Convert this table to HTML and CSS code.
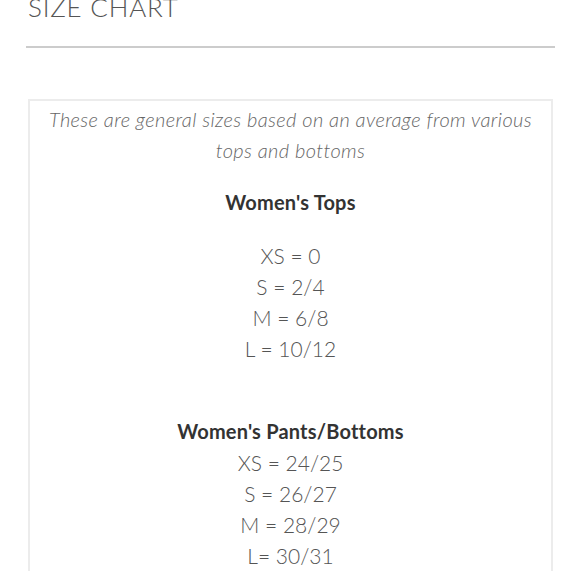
FILE: index.html
```html
<!DOCTYPE html>
<html>
<head>
<meta charset="utf-8">
<link rel="stylesheet" href="styles.css">
</head>
<body>
<div class="page">
  <h1 class="title">SIZE CHART</h1>
  <hr class="rule">
  <div class="chart">
    <p class="intro">These are general sizes based on an average from various tops and bottoms</p>
    <h2 class="group-title tops-title">Women's Tops</h2>
    <ul class="sizes">
      <li>XS = 0</li>
      <li>S = 2/4</li>
      <li>M = 6/8</li>
      <li>L = 10/12</li>
    </ul>
    <h2 class="group-title pants-title">Women's Pants/Bottoms</h2>
    <ul class="sizes pants">
      <li>XS = 24/25</li>
      <li>S = 26/27</li>
      <li>M = 28/29</li>
      <li>L= 30/31</li>
    </ul>
  </div>
</div>
</body>
</html>
```
FILE: styles.css
```css
html, body {
  margin: 0;
  padding: 0;
  background: #ffffff;
}
body {
  font-family: Lato, "Open Sans", sans-serif;
  color: #555;
}
.page {
  padding: 0 27px 0 28px;
  overflow: hidden;
  height: 580px;
}
.title {
  margin: -8px 0 0 0;
  font-size: 26px;
  line-height: 30px;
  font-weight: 300;
  letter-spacing: 0.8px;
  color: #555;
}
.rule {
  margin: 24px -2px 0 -2px;
  border: 0;
  height: 2px;
  background: #cccccc;
}
.chart {
  margin-top: 51px;
  border: 2px solid #ececec;
  border-bottom: 0;
  padding: 3px 12px 0;
  text-align: center;
}
.intro {
  margin: 0;
  font-style: italic;
  font-weight: 300;
  font-size: 20px;
  letter-spacing: 0.4px;
  line-height: 31px;
  color: #666;
}
.group-title {
  margin: 21px 0 0;
  font-size: 20px;
  letter-spacing: 0.2px;
  line-height: 31px;
  font-weight: 700;
  color: #333;
}
.pants-title {
  margin-top: 52px;
}
.sizes {
  list-style: none;
  margin: 22px 0 0;
  padding: 0;
  font-size: 21px;
  line-height: 31px;
  font-weight: 300;
  color: #555;
}
.sizes.pants {
  margin-top: 0;
}
```
